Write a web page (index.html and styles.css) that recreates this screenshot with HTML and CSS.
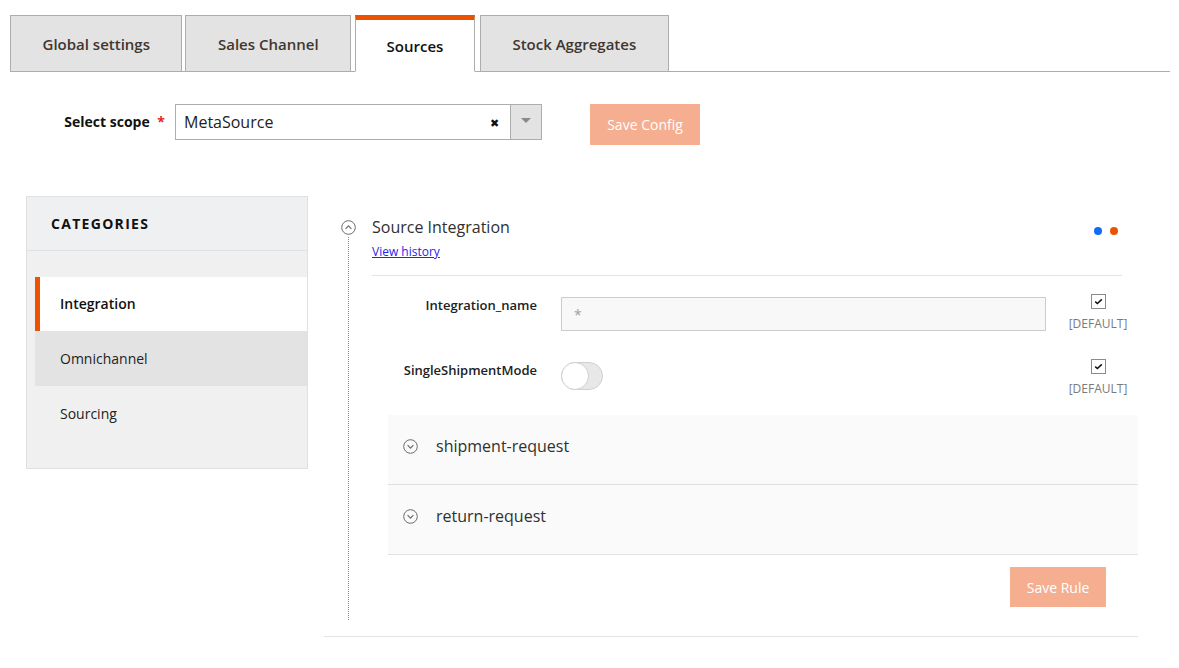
FILE: index.html
```html
<!DOCTYPE html>
<html lang="en">
<head>
<meta charset="utf-8">
<title>Sources</title>
<link rel="stylesheet" href="styles.css">
</head>
<body>
<div class="page">
  <nav class="tabs">
    <a class="tab">Global settings</a>
    <a class="tab">Sales Channel</a>
    <a class="tab tab-active">Sources</a>
    <a class="tab">Stock Aggregates</a>
  </nav>

  <div class="scope">
    <label class="scope-label">Select scope <span class="req">*</span></label>
    <div class="select">
      <span class="select-value">MetaSource</span>
      <span class="select-clear">&#x2716;</span>
      <span class="select-arrow"><span class="caret"></span></span>
    </div>
    <button class="btn btn-save-config">Save Config</button>
  </div>

  <div class="main">
    <aside class="cats">
      <div class="cats-head">CATEGORIES</div>
      <ul class="cats-list">
        <li class="cat cat-active">Integration</li>
        <li class="cat cat-hover">Omnichannel</li>
        <li class="cat">Sourcing</li>
      </ul>
    </aside>

    <section class="content">
      <div class="group">
        <div class="rail">
          <svg class="rail-icon" width="15" height="15" viewBox="0 0 15 15"><circle cx="7.5" cy="7.5" r="6.8" fill="none" stroke="#6b6b6b" stroke-width="1"/><path d="M4.6 8.8 L7.5 5.9 L10.4 8.8" fill="none" stroke="#6b6b6b" stroke-width="1.2"/></svg>
        </div>
        <div class="group-body">
          <div class="group-head">
            <div>
              <div class="group-title">Source Integration</div>
              <a class="history" href="#">View history</a>
            </div>
            <div class="dots"><span class="dot dot-blue"></span><span class="dot dot-orange"></span></div>
          </div>

          <div class="field">
            <div class="field-label">Integration_name</div>
            <div class="field-control"><input class="input" type="text" placeholder="*"></div>
            <div class="field-default">
              <span class="checkbox"><svg width="9" height="7" viewBox="0 0 9 7"><path d="M1.2 3.6 L3.4 5.6 L7.8 1.4" fill="none" stroke="#111" stroke-width="1.5"/></svg></span>
              <span class="default-text">[DEFAULT]</span>
            </div>
          </div>

          <div class="field">
            <div class="field-label">SingleShipmentMode</div>
            <div class="field-control"><span class="toggle"><span class="knob"></span></span></div>
            <div class="field-default">
              <span class="checkbox"><svg width="9" height="7" viewBox="0 0 9 7"><path d="M1.2 3.6 L3.4 5.6 L7.8 1.4" fill="none" stroke="#111" stroke-width="1.5"/></svg></span>
              <span class="default-text">[DEFAULT]</span>
            </div>
          </div>

          <div class="collapsibles">
            <div class="collapsible">
              <svg class="coll-icon" width="15" height="15" viewBox="0 0 15 15"><circle cx="7.5" cy="7.5" r="6.8" fill="none" stroke="#6b6b6b" stroke-width="1"/><path d="M4.6 6.2 L7.5 9.1 L10.4 6.2" fill="none" stroke="#6b6b6b" stroke-width="1.2"/></svg>
              <span class="coll-title">shipment-request</span>
            </div>
            <div class="collapsible">
              <svg class="coll-icon" width="15" height="15" viewBox="0 0 15 15"><circle cx="7.5" cy="7.5" r="6.8" fill="none" stroke="#6b6b6b" stroke-width="1"/><path d="M4.6 6.2 L7.5 9.1 L10.4 6.2" fill="none" stroke="#6b6b6b" stroke-width="1.2"/></svg>
              <span class="coll-title">return-request</span>
            </div>
          </div>

          <div class="actions">
            <button class="btn btn-save-rule">Save Rule</button>
          </div>
        </div>
      </div>
    </section>
  </div>
</div>
</body>
</html>
```

FILE: styles.css
```css
* { box-sizing: border-box; }

body {
  margin: 0;
  background: #fff;
  font-family: "Open Sans", "Liberation Sans", sans-serif;
  color: #303030;
}

.page {
  width: 1179px;
}

/* Tabs */
.tabs {
  display: flex;
  align-items: flex-end;
  padding-top: 15px;
  margin: 0 9px 0 10px;
  border-bottom: 1px solid #adadad;
}

.tab {
  display: flex;
  align-items: center;
  justify-content: center;
  height: 57px;
  padding: 0 31.5px;
  margin-bottom: -1px;
  margin-right: 4px;
  background: #e3e3e3;
  border: 1px solid #adadad;
  font-size: 15px;
  font-weight: 600;
  color: #41362f;
  white-space: nowrap;
}

.tab:first-child {
  margin-right: 3px;
}

.tab-active {
  background: #fff;
  border-top: 5px solid #eb5202;
  border-bottom-color: #fff;
  color: #111;
  padding: 0 30.5px;
  margin-right: 5px;
}

/* Scope */
.scope {
  display: flex;
  align-items: flex-start;
  margin-top: 32px;
}

.scope-label {
  width: 165px;
  text-align: right;
  font-size: 14px;
  font-weight: 700;
  color: #111;
  line-height: 36px;
}

.req {
  color: #e22626;
  margin-left: 4px;
}

.select {
  display: flex;
  align-items: center;
  width: 367px;
  height: 36px;
  margin-left: 10px;
  border: 1px solid #adadad;
  background: #fff;
}

.select-value {
  flex: 1;
  padding-left: 8px;
  font-size: 16px;
  color: #222;
}

.select-clear {
  font-size: 11px;
  color: #111;
  margin-right: 11px;
}

.select-arrow {
  display: flex;
  align-items: center;
  justify-content: center;
  width: 31px;
  height: 100%;
  background: #e3e3e3;
  border-left: 1px solid #adadad;
}

.caret {
  width: 0;
  height: 0;
  border-left: 5px solid transparent;
  border-right: 5px solid transparent;
  border-top: 5px solid #8a8a8a;
  margin-top: -4px;
}

.btn {
  border: 0;
  background: #f5ae8f;
  color: #fff;
  font-family: "Open Sans", "Liberation Sans", sans-serif;
  font-size: 14px;
  padding: 0;
}

.btn-save-config {
  width: 110px;
  height: 41px;
  margin-left: 48px;
}

/* Main */
.main {
  display: flex;
  align-items: flex-start;
  margin-top: 51px;
  padding-left: 26px;
}

.cats {
  width: 282px;
  background: #f0f0f0;
  border: 1px solid #e0e0e0;
  padding-bottom: 27px;
}

.cats-head {
  height: 54px;
  line-height: 54px;
  padding-left: 24px;
  background: #eff0f1;
  border-bottom: 1px solid #e0e0e0;
  font-size: 14px;
  font-weight: 700;
  letter-spacing: 1.3px;
  color: #111;
}

.cats-list {
  list-style: none;
  margin: 26px 0 0 8px;
  padding: 0;
}

.cat {
  height: 55px;
  line-height: 55px;
  padding-left: 25px;
  font-size: 14px;
  color: #222;
}

.cat-active {
  height: 54px;
  line-height: 54px;
  background: #fff;
  border-left: 5px solid #eb5202;
  padding-left: 20px;
  font-weight: 600;
  color: #111;
}

.cat-hover {
  background: #e3e3e3;
}

/* Content */
.content {
  width: 814px;
  margin-left: 16px;
}

.group {
  display: flex;
  border-bottom: 1px solid #e3e3e3;
}

.rail {
  width: 48px;
  display: flex;
  flex-direction: column;
  align-items: center;
  padding-top: 24px;
}

.rail-icon {
  display: block;
  flex: none;
}

.rail::after {
  content: "";
  flex: 1;
  width: 0;
  margin-top: 2px;
  margin-bottom: 16px;
  border-left: 1px dotted #8a8a8a;
}

.group-body {
  flex: 1;
  padding-top: 21px;
  padding-bottom: 29px;
}

.group-head {
  display: flex;
  justify-content: space-between;
  align-items: flex-start;
  margin-right: 16px;
  padding: 0 4px 14px 0;
  border-bottom: 1px solid #e3e3e3;
}

.group-title {
  font-size: 16px;
  line-height: 20px;
  color: #303030;
}

.history {
  display: inline-block;
  margin-top: 7px;
  font-size: 12px;
  line-height: 16px;
  color: #2525e8;
}

.dots {
  display: flex;
  gap: 8px;
  margin-top: 10px;
}

.dot {
  width: 8px;
  height: 8px;
  border-radius: 50%;
}

.dot-blue { background: #0f6cf5; }
.dot-orange { background: #eb5202; }

/* Fields */
.field {
  display: flex;
  align-items: flex-start;
  margin-top: 18px;
}

.field + .field {
  margin-top: 27px;
}

.field-label {
  width: 165px;
  text-align: right;
  padding-top: 2px;
  font-size: 13px;
  line-height: 18px;
  font-weight: 600;
  color: #222;
}

.field-control {
  width: 485px;
  margin-left: 24px;
  padding-top: 3px;
}

.input {
  display: block;
  width: 100%;
  height: 34px;
  padding: 0 12px;
  border: 1px solid #cccccc;
  background: #f8f8f8;
  font-family: "Open Sans", "Liberation Sans", sans-serif;
  font-size: 14px;
}

.input::placeholder {
  color: #a0a0a0;
}

.toggle {
  display: block;
  position: relative;
  width: 42px;
  height: 28px;
  border-radius: 14px;
  background: #e8e8e8;
  border: 1px solid #d0d0d0;
}

.knob {
  position: absolute;
  left: -1px;
  top: -1px;
  width: 28px;
  height: 28px;
  border-radius: 50%;
  background: #fff;
  border: 1px solid #d0d0d0;
}

.field-default {
  width: 60px;
  margin-left: 22px;
  display: flex;
  flex-direction: column;
  align-items: center;
}

.checkbox {
  display: flex;
  align-items: center;
  justify-content: center;
  width: 15px;
  height: 15px;
  border: 1px solid #8a8a8a;
  background: #fff;
}

.default-text {
  margin-top: 7px;
  font-size: 12px;
  line-height: 16px;
  color: #7a7a7a;
}

/* Collapsibles */
.collapsibles {
  margin: 18px 0 0 16px;
}

.collapsible {
  display: flex;
  align-items: flex-start;
  height: 70px;
  padding: 20px 0 0 15px;
  background: #fafafa;
  border-bottom: 1px solid #e0e0e0;
}

.coll-icon {
  flex: none;
  margin-top: 4px;
}

.coll-title {
  margin-left: 18px;
  font-size: 16px;
  line-height: 22px;
  color: #303030;
}

.actions {
  display: flex;
  justify-content: flex-end;
  margin-top: 12px;
  padding-right: 32px;
}

.btn-save-rule {
  width: 96px;
  height: 40px;
}
```
